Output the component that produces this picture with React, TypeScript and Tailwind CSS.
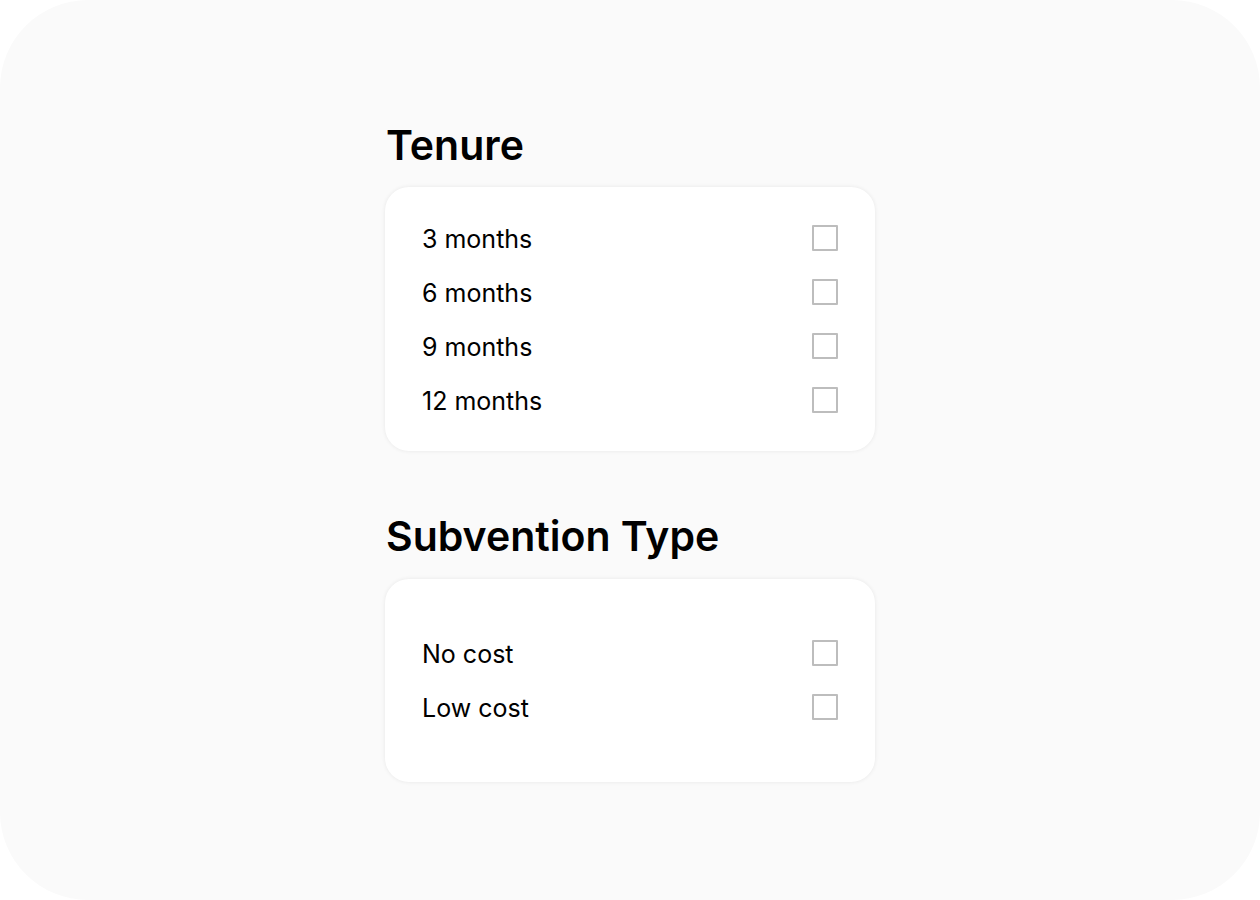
import React from "react";

function Box() {
  return <div className="w-[26px] h-[26px] border-2 border-[#bdbdbd] rounded-[1px] bg-white" />;
}

function Row({ label }: { label: string }) {
  return (
    <div className="flex items-center justify-between h-[54px]">
      <span className="text-[25px] leading-[30px] pt-[2px] text-black">{label}</span>
      <Box />
    </div>
  );
}

export default function App() {
  return (
    <div className="w-[1260px] h-[900px] bg-white" style={{ fontFamily: "Inter, 'Noto Sans', sans-serif" }}>
      <div className="w-full h-full bg-[#fafafa] rounded-[88px] flex flex-col items-center pt-[117px]">
        <div className="w-[490px] flex flex-col">
          <h2 className="text-[41px] font-semibold text-black leading-[56px] px-[1px]">Tenure</h2>
          <div className="mt-[14px] bg-white rounded-[24px] shadow-[0_0_4px_rgba(0,0,0,0.08)] px-[37px] py-[24px]">
            <Row label="3 months" />
            <Row label="6 months" />
            <Row label="9 months" />
            <Row label="12 months" />
          </div>
          <h2 className="mt-[57px] text-[41px] font-semibold text-black leading-[56px] px-[1px]">Subvention Type</h2>
          <div className="mt-[15px] bg-white rounded-[24px] shadow-[0_0_4px_rgba(0,0,0,0.08)] px-[37px] pt-[47px] pb-[48px]">
            <Row label="No cost" />
            <Row label="Low cost" />
          </div>
        </div>
      </div>
    </div>
  );
}
